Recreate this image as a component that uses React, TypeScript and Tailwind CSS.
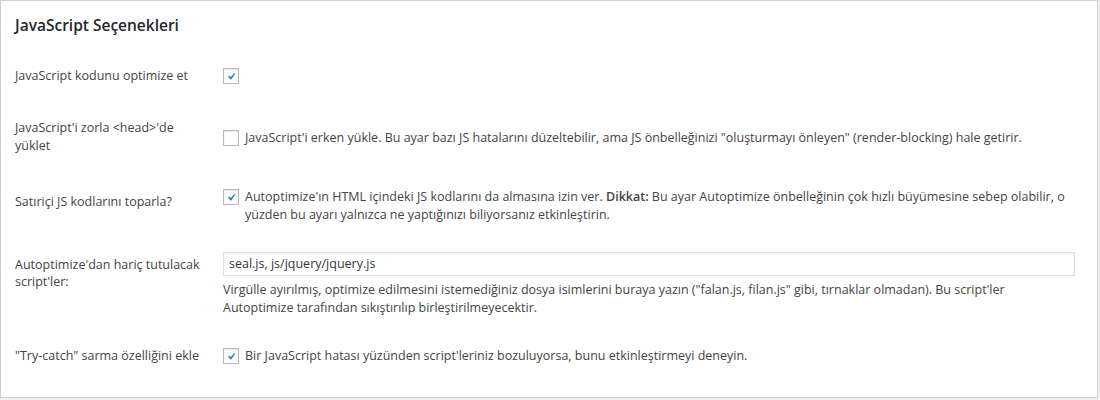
import React from 'react'

function Check({ checked }: { checked: boolean }) {
  return (
    <span className="inline-flex items-center justify-center w-[16px] h-[16px] shrink-0 border border-[#b4b9be] bg-white shadow-[inset_0_1px_2px_rgba(0,0,0,0.1)]">
      {checked && (
        <svg width="15" height="15" viewBox="0 0 20 20">
          <path d="M14.83 4.89l1.34.94-5.81 8.38H9.02L5.78 9.67l1.34-1.25 2.57 2.4z" fill="#1e8cbe" />
        </svg>
      )}
    </span>
  )
}

export default function App() {
  return (
    <div className="w-[1100px] h-[400px] bg-[#f1f1f1] text-[12.5px] leading-[18px] text-[#444]" style={{ fontFamily: '"Open Sans", "Noto Sans", sans-serif' }}>
      <div className="w-[1098px] h-[398px] bg-white border border-[#ccd0d4] pl-[14px]">
        <h2 className="pt-[14px] text-[15.5px] leading-[20px] font-semibold text-[#23282d]">JavaScript Seçenekleri</h2>

        <div className="flex items-start h-[55px] mt-[15px]">
          <div className="w-[208px] pt-[17px]">JavaScript kodunu optimize et</div>
          <div className="pt-[18px]"><Check checked /></div>
        </div>

        <div className="flex items-start h-[70px]">
          <div className="w-[180px] pt-[14px] mr-[28px]">JavaScript'i zorla &lt;head&gt;'de yüklet</div>
          <div className="pt-[24px] flex items-center gap-[6px]">
            <Check checked={false} />
            <span>JavaScript'i erken yükle. Bu ayar bazı JS hatalarını düzeltebilir, ama JS önbelleğinizi "oluşturmayı önleyen" (render-blocking) hale getirir.</span>
          </div>
        </div>

        <div className="flex items-start h-[60px]">
          <div className="w-[208px] pt-[18px]">Satıriçi JS kodlarını toparla?</div>
          <div className="pt-[13px] flex items-start gap-[6px] w-[850px]">
            <span className="mt-[1px]"><Check checked /></span>
            <span>Autoptimize'ın HTML içindeki JS kodlarını da almasına izin ver. <b className="font-semibold">Dikkat:</b> Bu ayar Autoptimize önbelleğinin çok hızlı büyümesine sebep olabilir, o yüzden bu ayarı yalnızca ne yaptığınızı biliyorsanız etkinleştirin.</span>
          </div>
        </div>

        <div className="flex items-start h-[95px]">
          <div className="w-[196px] pt-[21px] mr-[12px] leading-[17px]">Autoptimize'dan hariç tutulacak script'ler:</div>
          <div className="pt-[17px] w-[852px]">
            <div className="h-[24px] border border-[#ddd] shadow-[inset_0_1px_2px_rgba(0,0,0,0.07)] px-[5px] flex items-center text-[#32373c]">seal.js, js/jquery/jquery.js</div>
            <p className="mt-[5px]">Virgülle ayırılmış, optimize edilmesini istemediğiniz dosya isimlerini buraya yazın ("falan.js, filan.js" gibi, tırnaklar olmadan). Bu script'ler Autoptimize tarafından sıkıştırılıp birleştirilmeyecektir.</p>
          </div>
        </div>

        <div className="flex items-start">
          <div className="w-[208px] pt-[17px]">"Try-catch" sarma özelliğini ekle</div>
          <div className="pt-[17px] flex items-center gap-[6px]">
            <Check checked />
            <span>Bir JavaScript hatası yüzünden script'leriniz bozuluyorsa, bunu etkinleştirmeyi deneyin.</span>
          </div>
        </div>
      </div>
    </div>
  )
}
